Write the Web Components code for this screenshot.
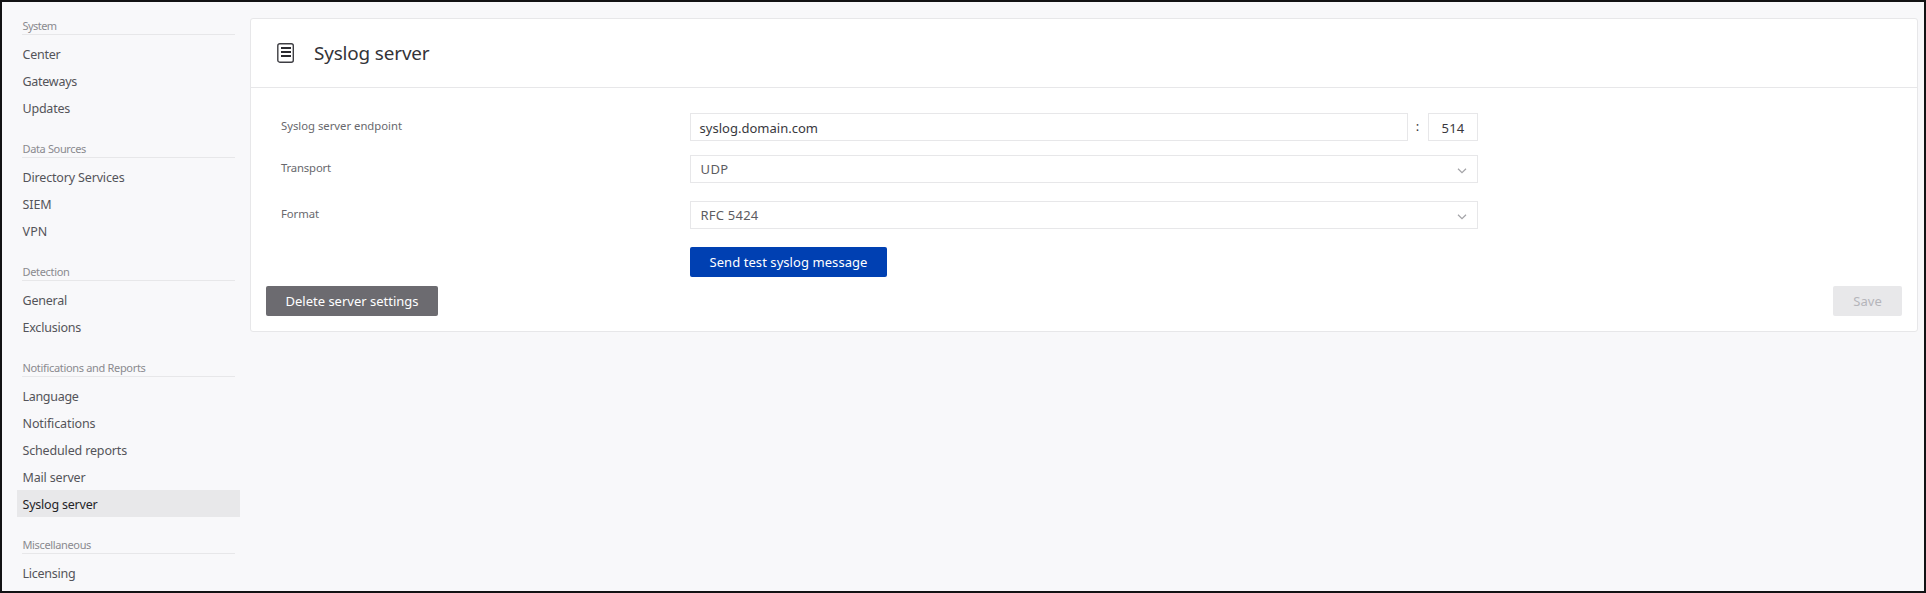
<!DOCTYPE html>
<html lang="en">
<head>
<meta charset="utf-8">
<title>Syslog server</title>
<style>
html,body{margin:0;height:100%}
body{font-family:"Noto Sans","Open Sans",sans-serif;background:#f8f8fa;overflow:hidden}
</style>
</head>
<body>
<app-shell>
  <side-nav slot="nav">
    <nav-section heading="System" w="34">
      <nav-item w="38">Center</nav-item><nav-item w="54.5">Gateways</nav-item><nav-item w="47.5">Updates</nav-item>
    </nav-section>
    <nav-section heading="Data Sources" w="63.5">
      <nav-item w="102">Directory Services</nav-item><nav-item w="29">SIEM</nav-item><nav-item w="25">VPN</nav-item>
    </nav-section>
    <nav-section heading="Detection" w="47">
      <nav-item w="44.5">General</nav-item><nav-item w="58.5">Exclusions</nav-item>
    </nav-section>
    <nav-section heading="Notifications and Reports" w="123">
      <nav-item w="56">Language</nav-item><nav-item w="73">Notifications</nav-item><nav-item w="104.5">Scheduled reports</nav-item><nav-item w="63">Mail server</nav-item><nav-item w="75" selected>Syslog server</nav-item>
    </nav-section>
    <nav-section heading="Miscellaneous" w="68.5">
      <nav-item w="53">Licensing</nav-item>
    </nav-section>
  </side-nav>
  <settings-card>
    <list-icon slot="icon"></list-icon>
    <card-title slot="title" w="115.5">Syslog server</card-title>
    <form-row label="Syslog server endpoint" w="121" style="height:42px">
      <text-box w="118.5">syslog.domain.com</text-box><colon-mark></colon-mark><text-box w="23" narrow>514</text-box>
    </form-row>
    <form-row label="Transport" w="50" style="height:46px"><select-box w="28">UDP</select-box></form-row>
    <form-row label="Format" w="38" style="height:46px"><select-box w="58">RFC 5424</select-box></form-row>
    <form-row><push-button kind="primary" w="158" style="width:197px">Send test syslog message</push-button></form-row>
    <push-button slot="actions" kind="secondary" w="133" style="width:172px">Delete server settings</push-button>
    <push-button slot="actions" kind="disabled" w="28.5" style="width:69px">Save</push-button>
  </settings-card>
</app-shell>
<script>
const define = (name, html, init) => customElements.define(name, class extends HTMLElement {
  constructor() { super(); this.attachShadow({mode: 'open'}).innerHTML = html; }
  connectedCallback() { if (init) init(this, this.shadowRoot); }
});
const pen = document.createElement('canvas').getContext('2d');

// Sets the letter spacing so that the text takes the width given in "w".
function fit(node, text, width) {
  const cs = getComputedStyle(node);
  pen.font = `${cs.fontWeight} ${cs.fontSize} ${cs.fontFamily}`;
  const gap = (width - pen.measureText(text).width) / text.length;
  node.style.letterSpacing = gap.toFixed(3) + 'px';
}
const fitSlot = (el, root) => fit(root.querySelector('span'), el.textContent.trim(), +el.getAttribute('w'));

define('app-shell', `<style>
:host{display:flex;box-sizing:border-box;width:100%;height:593px;border:2px solid #121214;background:#f8f8fa;overflow:hidden}
slot[name=nav]{display:block;flex:none}
main{flex:1;padding:16px 6px 0 10px;min-width:0}
</style><slot name="nav"></slot><main><slot></slot></main>`);

define('side-nav', `<style>
:host{display:flex;flex-direction:column;gap:12px;width:223px;padding:8px 0 0 15px}
</style><slot></slot>`);

define('nav-section', `<style>
:host{display:block}
header{box-sizing:border-box;height:25px;margin:0 5px 5px;border-bottom:1px solid #e7e7e9;color:#8a8a8f;font-size:11px;white-space:nowrap}
span{display:block;height:24px;line-height:31px;padding-left:.5px}
</style><header><span></span></header><slot></slot>`, (el, r) => {
  const s = r.querySelector('span'); s.textContent = el.getAttribute('heading'); fit(s, s.textContent, +el.getAttribute('w'));
});

define('nav-item', `<style>
:host{display:block;box-sizing:border-box;height:27px;line-height:27px;padding:1px 0 0 5.5px;color:#545459;font-size:12.5px;white-space:nowrap}
:host([selected]){background:#e8e8ea;color:#242428}
</style><span><slot></slot></span>`, fitSlot);

define('card-title', `<style>:host{display:block;white-space:nowrap;font-size:18.9px;line-height:28px;color:#333338}</style><span><slot></slot></span>`, fitSlot);

define('list-icon', `<style>:host{display:block;width:18px;height:20px}svg{display:block}</style>
<svg width="18" height="20" viewBox="0 0 18 20"><rect x=".8" y=".7" width="15.5" height="18.5" rx="2" fill="none" stroke="#3e3e43" stroke-width="1.4"/><path d="M4 5h10M4 9h10M4 13h10" stroke="#2b2b2f" stroke-width="2"/></svg>`);

define('settings-card', `<style>
:host{display:block;box-sizing:border-box;height:314px;background:#fff;border:1px solid #e7e7e9;border-radius:3px}
header{box-sizing:border-box;height:69px;border-bottom:1px solid #e7e7e9;display:flex;align-items:center;padding-left:26px;gap:19px}
section{padding:25px 30px 0;height:173px;box-sizing:border-box}
footer{display:flex;justify-content:space-between;padding:0 15px;margin-top:25px;height:30px}
</style><header><slot name="icon"></slot><slot name="title"></slot></header><section><slot></slot></section><footer><slot name="actions"></slot></footer>`);

define('form-row', `<style>
:host{display:flex;align-items:flex-start}
label{width:409px;flex:none;font-size:11.3px;line-height:26px;color:#68686d;white-space:nowrap}
div{display:flex;width:788px}
</style><label><span></span></label><div><slot></slot></div>`, (el, r) => {
  const s = r.querySelector('span'); s.textContent = el.getAttribute('label') || ''; if (s.textContent) fit(s, s.textContent, +el.getAttribute('w'));
});

define('text-box', `<style>
:host{display:block;flex:1;box-sizing:border-box;height:28px;border:1px solid #e7e7e9;background:#fff;padding-left:8.5px;font-size:13px;line-height:28px;color:#38383d;white-space:nowrap}
:host([narrow]){flex:none;width:50px;padding-left:12.5px}
</style><span><slot></slot></span>`, fitSlot);

define('colon-mark', `<style>:host{display:block;box-sizing:border-box;width:20px;padding-right:1px;text-align:center;font-size:13px;line-height:27px;color:#38383d}</style>:`);

define('select-box', `<style>
:host{display:flex;flex:1;align-items:center;justify-content:space-between;box-sizing:border-box;height:28px;border:1px solid #e7e7e9;background:#fff;padding:0 10px 0 9.5px;font-size:13px;line-height:26px;color:#5c5c61;white-space:nowrap}
svg{display:block;margin-top:3px}
</style><span><slot></slot></span><svg width="10" height="6" viewBox="0 0 10 6"><path d="M1 .8 5 4.6 9 .8" fill="none" stroke="#a3a3a7" stroke-width="1.2"/></svg>`, fitSlot);

define('push-button', `<style>
:host{display:flex;justify-content:center;box-sizing:border-box;height:30px;border-radius:2px;font-size:13px;line-height:30px;color:#fff;white-space:nowrap}
:host([kind=primary]){background:#0040b2}
:host([kind=secondary]){background:#6c6b70}
:host([kind=disabled]){background:#e8e8ea;color:#b5b5ba}
</style><span><slot></slot></span>`, fitSlot);
</script>
</body>
</html>
